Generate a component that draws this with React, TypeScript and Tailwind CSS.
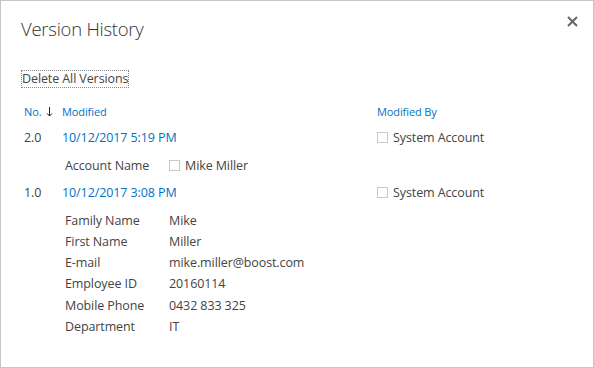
import React from "react";

const details: [string, string][] = [
  ["Family Name", "Mike"],
  ["First Name", "Miller"],
  ["E-mail", "mike.miller@boost.com"],
  ["Employee ID", "20160114"],
  ["Mobile Phone", "0432 833 325"],
  ["Department", "IT"],
];

function Box() {
  return <span className="inline-block w-[11px] h-[11px] border border-[#c8c8c8] bg-white mr-[5px] shrink-0" />;
}

export default function App() {
  return (
    <div className="relative w-[594px] h-[368px] border border-[#c6c6c6] bg-white text-[#444] font-['Open_Sans',sans-serif] text-[12.5px] tracking-[-0.1px]">
      <button className="absolute right-[14px] top-[13px] w-[14px] h-[14px] flex items-center justify-center">
        <svg width="11" height="11" viewBox="0 0 11 11">
          <path d="M1 1L10 10M10 1L1 10" stroke="#666" strokeWidth="2" />
        </svg>
      </button>
      <div className="pl-[20px] pt-[14px]">
        <h1 className="text-[18.5px] leading-[28px] font-light text-[#333] tracking-[-0.25px]">Version History</h1>
        <div className="mt-[27px]">
          <span className="inline-block border border-dotted border-[#888] px-0 leading-[16px] text-[#444]">Delete All Versions</span>
        </div>
        <div className="mt-[15px] pl-[3px] grid grid-cols-[38px_315px_1fr] text-[11px] leading-[16px] text-[#0072c6]">
          <div className="flex items-center">
            <span>No.</span>
            <svg className="ml-[4px]" width="7" height="10" viewBox="0 0 7 10">
              <path d="M3.5 0V9M1 6.5L3.5 9L6 6.5" stroke="#222" strokeWidth="1" fill="none" />
            </svg>
          </div>
          <div>Modified</div>
          <div>Modified By</div>
        </div>
        <div className="pl-[3px] mt-[9px]">
          <div className="grid grid-cols-[38px_315px_1fr] leading-[18px]">
            <div>2.0</div>
            <div className="text-[#0072c6]">10/12/2017 5:19 PM</div>
            <div className="flex items-center"><Box />System Account</div>
          </div>
          <div className="grid grid-cols-[104px_1fr] pl-[41px] mt-[10px] leading-[18px]">
            <div>Account Name</div>
            <div className="flex items-center"><Box />Mike Miller</div>
          </div>
          <div className="grid grid-cols-[38px_315px_1fr] leading-[18px] mt-[9px]">
            <div>1.0</div>
            <div className="text-[#0072c6]">10/12/2017 3:08 PM</div>
            <div className="flex items-center"><Box />System Account</div>
          </div>
          <div className="pl-[41px] mt-[10px] flex flex-col">
            {details.map(([k, v]) => (
              <div key={k} className="grid grid-cols-[104px_1fr] h-[21.2px] leading-[18px]">
                <div>{k}</div>
                <div>{v}</div>
              </div>
            ))}
          </div>
        </div>
      </div>
    </div>
  );
}
